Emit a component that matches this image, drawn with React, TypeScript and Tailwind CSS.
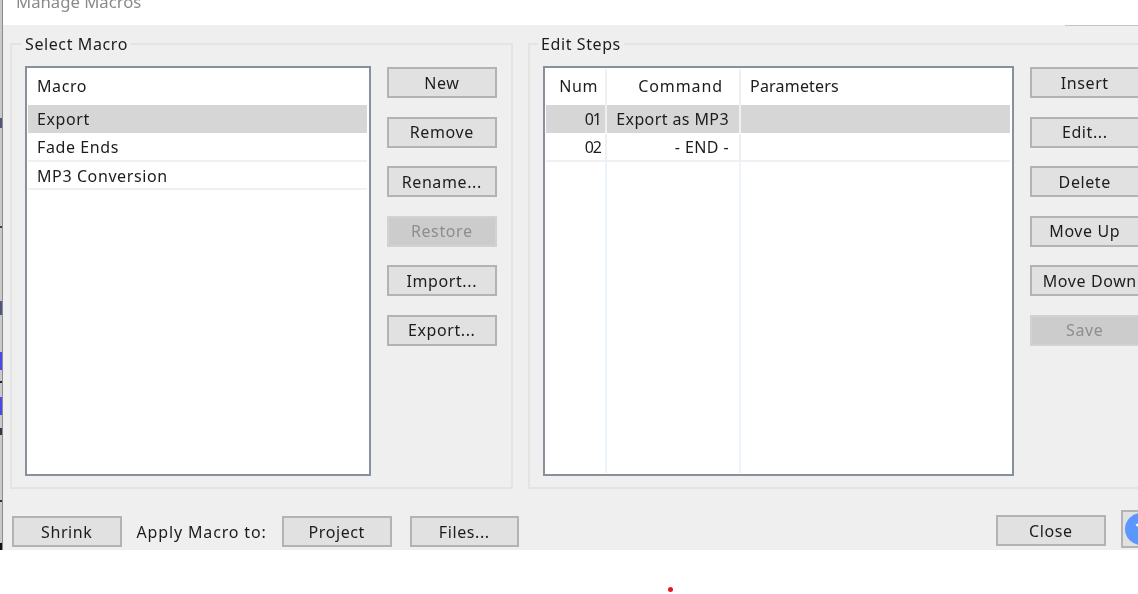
const edgeBits = [
  "h-[118px] bg-[#c9c9c9]",
  "h-[10px] bg-[#50557a]",
  "h-[98px] bg-[#c9c9c9]",
  "h-[2px] bg-[#444444]",
  "h-[73px] bg-[#c9c9c9]",
  "h-[14px] bg-[#50557a]",
  "h-[37px] bg-[#c9c9c9]",
  "h-[18px] bg-[#4a4ae6]",
  "h-[11px] bg-[#c9c9c9]",
  "h-[2px] bg-[#222222]",
  "h-[14px] bg-[#c9c9c9]",
  "h-[18px] bg-[#4a4ae6]",
  "h-[13px] bg-[#c9c9c9]",
  "h-[7px] bg-[#33364f]",
  "h-[65px] bg-[#c9c9c9]",
  "h-[2px] bg-[#333333]",
  "h-[41px] bg-[#c9c9c9]",
  "h-[7px] bg-[#111111]",
];

const Btn = ({ label, disabled, className = "" }: { label: string; disabled?: boolean; className?: string }) => (
  <div
    className={`flex h-[31px] w-[109.5px] shrink-0 items-center justify-center whitespace-nowrap border-2 ${
      disabled
        ? "border-[#d2d2d2] bg-[#cccccc] text-[#8e8e8e]"
        : "border-[#b3b3b3] bg-[#e1e1e1] text-[#1c1c1c]"
    } ${className}`}
  >
    {label}
  </div>
);

const ButtonColumn = ({ items }: { items: { label: string; disabled?: boolean; className?: string }[] }) => (
  <div className="mt-px flex shrink-0 flex-col gap-[18.6px]">
    {items.map((b) => (
      <Btn key={b.label} label={b.label} disabled={b.disabled} className={b.className} />
    ))}
  </div>
);

const Group = ({
  title,
  className,
  legendClass,
  children,
}: {
  title: string;
  className: string;
  legendClass: string;
  children: React.ReactNode;
}) => (
  <fieldset className={`h-[455px] shrink-0 border-2 border-[#e4e4e4] ${className}`}>
    <legend className={`h-[20px] px-[3px] leading-[20px] text-[#1c1c1c] ${legendClass}`}>{title}</legend>
    <div className="flex gap-[16px] pl-[13px] pt-[12px]">{children}</div>
  </fieldset>
);

const MacroList = () => (
  <div className="h-[410px] w-[346px] shrink-0 border-2 border-[#87909c] bg-white p-px pr-[2px] text-[#1c1c1c]">
    <div className="flex h-[36px] items-center pb-[2px] pl-[9px]">Macro</div>
    <div className="flex h-[28px] items-center bg-[#d6d6d6] pl-[9px]">Export</div>
    <div className="flex h-[29px] items-center border-b-2 border-[#f0f0f0] pl-[9px] pt-px">Fade Ends</div>
    <div className="flex h-[28px] items-center border-b-2 border-[#f0f0f0] pl-[9px] pt-px">MP3 Conversion</div>
  </div>
);

const StepRow = ({ num, cmd, selected }: { num: string; cmd: string; selected?: boolean }) => (
  <div className={`flex ${selected ? "h-[28px] bg-[#d6d6d6]" : "h-[29px] border-b-2 border-[#f0f0f0] pt-px"}`}>
    <div className="flex w-[61px] items-center justify-end border-r-2 border-[#f0f0f0] pr-[4px] tracking-[-1px]">{num}</div>
    <div className="flex w-[134px] items-center justify-end border-r-2 border-[#f0f0f0] pr-[10px] tracking-[0.4px]">{cmd}</div>
  </div>
);

const StepList = () => (
  <div className="flex h-[410px] w-[471px] shrink-0 flex-col border-2 border-[#87909c] bg-white p-px pr-[2px] text-[#1c1c1c]">
    <div className="flex h-[36px]">
      <div className="flex w-[61px] items-center justify-end border-r-2 border-[#f0f0f0] pb-[2px] pr-[7px]">Num</div>
      <div className="flex w-[134px] items-center justify-end border-r-2 border-[#f0f0f0] pb-[2px] pr-[16px] tracking-[0.9px]">Command</div>
      <div className="flex items-center pb-[2px] pl-[9px] tracking-[0.2px]">Parameters</div>
    </div>
    <StepRow num="01" cmd="Export as MP3" selected />
    <StepRow num="02" cmd="- END -" />
    <div className="flex flex-1">
      <div className="w-[61px] border-r-2 border-[#edf4fb]" />
      <div className="w-[134px] border-r-2 border-[#edf4fb]" />
    </div>
  </div>
);

export default function App() {
  return (
    <div className="flex h-[594px] w-[1138px] overflow-hidden bg-white font-['Noto_Sans',sans-serif] text-[16px] tracking-[0.6px] blur-[0.35px]">
      <div className="flex h-[550px] w-[3px] shrink-0 flex-col border-r border-[#8c8c8c]">
        {edgeBits.map((c, i) => (
          <div key={i} className={c} />
        ))}
      </div>

      <div className="flex min-w-0 flex-1 flex-col">
        <div className="h-[25px] overflow-hidden pl-[13px]">
          <div className="-mt-[8px] text-[16.7px] leading-[20px] tracking-normal text-[#8a8a8a]">Manage Macros</div>
        </div>

        <div className="relative h-[525px] overflow-hidden bg-[#efefef] pl-[7px] pt-[9px]">
          <div className="absolute right-0 top-0 h-px w-[73px] bg-[#c4c4c4]" />

          <div className="flex gap-[15px]">
            <Group title="Select Macro" className="w-[503px]" legendClass="ml-[10px]">
              <MacroList />
              <ButtonColumn
                items={[
                  { label: "New" },
                  { label: "Remove" },
                  { label: "Rename..." },
                  { label: "Restore", disabled: true },
                  { label: "Import..." },
                  { label: "Export..." },
                ]}
              />
            </Group>
            <Group title="Edit Steps" className="w-[640px]" legendClass="ml-[8px]">
              <StepList />
              <ButtonColumn
                items={[
                  { label: "Insert" },
                  { label: "Edit..." },
                  { label: "Delete" },
                  { label: "Move Up" },
                  { label: "Move Down", className: "pl-[10px]" },
                  { label: "Save", disabled: true },
                ]}
              />
            </Group>
          </div>

          <div className="ml-[2px] mt-[21px] flex h-[38px] w-[1200px] items-end text-[#1c1c1c]">
            <Btn label="Shrink" className="mb-px" />
            <div className="mb-px flex h-[31px] w-[160.5px] shrink-0 items-center pl-[15px] pt-px tracking-[0.85px]">Apply Macro to:</div>
            <Btn label="Project" className="mb-px" />
            <Btn label="Files..." className="mb-px ml-[18px]" />
            <Btn label="Close" className="mb-[2px] ml-[477px]" />
            <div className="ml-[15.5px] flex h-[38px] w-[44px] shrink-0 items-center border-2 border-[#b3b3b3] bg-[#e1e1e1] pl-[2px]">
              <div className="flex size-[32px] items-center justify-center rounded-full bg-[#5b97ff] text-[22px] font-bold leading-none text-white">
                ?
              </div>
            </div>
          </div>
        </div>

        <div className="ml-[665px] mt-[37px] size-[5px] rounded-full bg-[#e8161e]" />
      </div>
    </div>
  );
}
